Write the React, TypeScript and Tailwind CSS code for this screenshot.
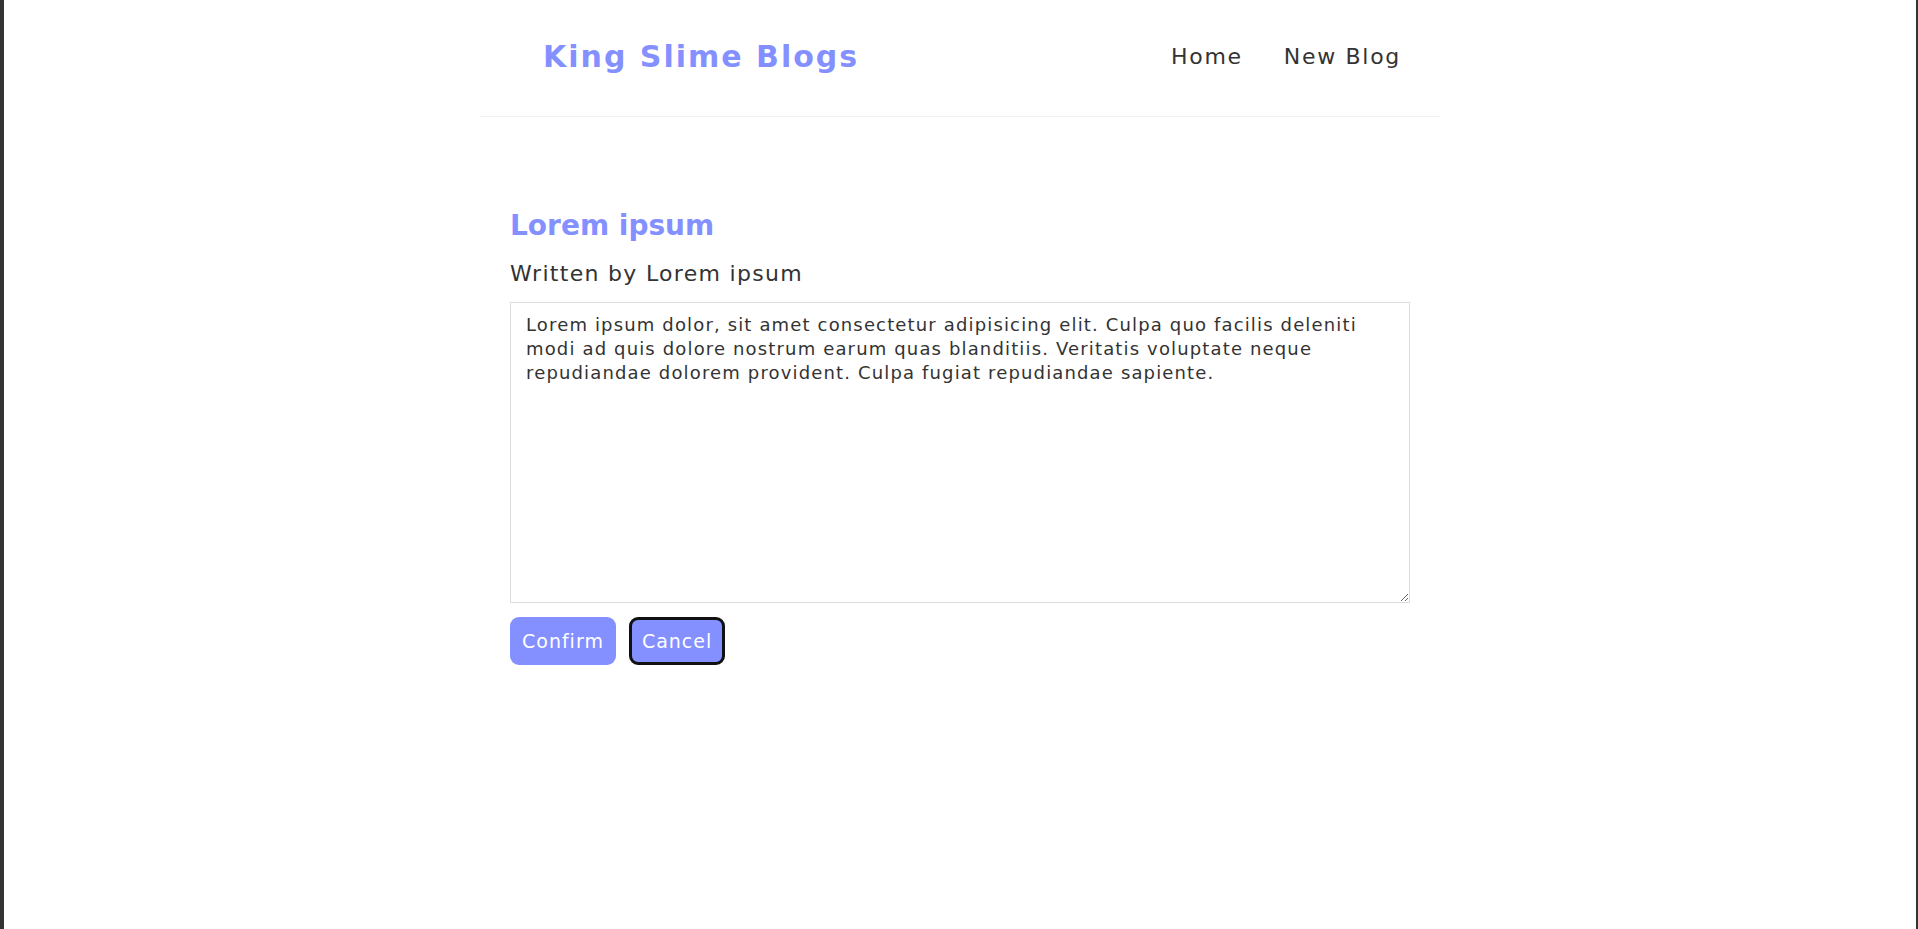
import React, { useState } from "react";

const font = { fontFamily: "'DejaVu Sans', sans-serif" };

const initialBody =
  "Lorem ipsum dolor, sit amet consectetur adipisicing elit. Culpa quo facilis deleniti modi ad quis dolore nostrum earum quas blanditiis. Veritatis voluptate neque repudiandae dolorem provident. Culpa fugiat repudiandae sapiente.";

function Navbar() {
  return (
    <nav className="mx-auto flex h-[117px] max-w-[960px] items-center border-b border-[#f2f2f2] pb-[3px] pl-[63px] pr-[39px]">
      <h1 className="text-[30px] font-bold tracking-[2px] text-[#8490ff]">King Slime Blogs</h1>
      <div className="ml-auto flex gap-[41px] text-[22px] tracking-[1.7px] text-[#333]">
        <a href="#">Home</a>
        <a href="#">New Blog</a>
      </div>
    </nav>
  );
}

export default function App() {
  const [body, setBody] = useState(initialBody);

  return (
    <div
      className="min-h-screen border-l-4 border-r-2 border-[#333] bg-white text-[#333]"
      style={font}
    >
      <Navbar />

      <div className="mx-auto w-[900px] pt-[92px]">
        <h2 className="text-[28px] font-bold leading-[34px] text-[#8490ff]">Lorem ipsum</h2>
        <p className="mt-[17px] text-[22px] leading-[28px] tracking-[1.3px]">Written by Lorem ipsum</p>

        <textarea
          className="mt-[14px] block h-[301px] w-[900px] border border-[#dcdcdc] px-[15px] py-[10px] text-[18px] leading-[24px] tracking-[1.15px] text-[#333] outline-none"
          value={body}
          onChange={(e) => setBody(e.target.value)}
        />

        {/* Actions */}
        <div className="mt-[14px] flex gap-[13px]">
          <button className="h-[48px] rounded-[9px] bg-[#8490ff] px-[12px] text-[19px] tracking-[1px] text-white">
            Confirm
          </button>
          <button className="h-[48px] rounded-[9px] border-[3px] border-[#111] bg-[#8490ff] px-[10px] text-[19px] tracking-[1px] text-white">
            Cancel
          </button>
        </div>
      </div>
    </div>
  );
}
